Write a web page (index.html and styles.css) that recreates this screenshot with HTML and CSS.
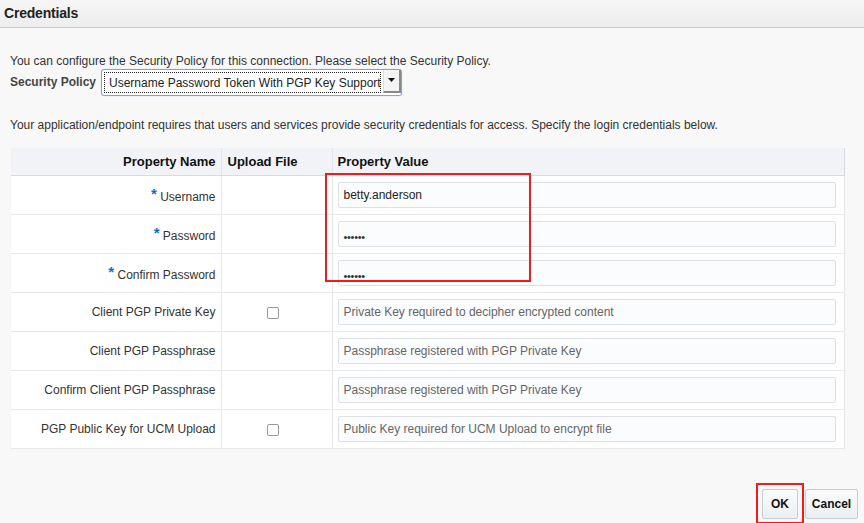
FILE: index.html
```html
<!DOCTYPE html>
<html>
<head>
<meta charset="utf-8">
<link rel="stylesheet" href="styles.css">
</head>
<body>
<div class="titlebar">Credentials</div>
<div class="content">
  <p class="intro">You can configure the Security Policy for this connection. Please select the Security Policy.</p>
  <div class="policy-row">
    <span class="policy-label">Security Policy</span>
    <div class="select">
      <span class="select-text">Username Password Token With PGP Key Support</span>
      <span class="select-btn"><svg width="7" height="4" viewBox="0 0 7 4"><path d="M0 0h7L3.5 4z" fill="#111"/></svg></span>
    </div>
  </div>
  <p class="desc">Your application/endpoint requires that users and services provide security credentials for access. Specify the login credentials below.</p>
  <div class="table-wrap">
    <table class="props">
      <colgroup><col class="c1"><col class="c2"><col class="c3"></colgroup>
      <thead>
        <tr><th class="name">Property Name</th><th class="upload">Upload File</th><th class="value">Property Value</th></tr>
      </thead>
      <tbody>
        <tr><td class="name"><span class="req">*</span> Username</td><td class="upload"></td><td class="value"><div class="field filled">betty.anderson</div></td></tr>
        <tr><td class="name"><span class="req">*</span> Password</td><td class="upload"></td><td class="value"><div class="field filled dots">••••••</div></td></tr>
        <tr><td class="name"><span class="req">*</span> Confirm Password</td><td class="upload"></td><td class="value"><div class="field filled dots">••••••</div></td></tr>
        <tr><td class="name">Client PGP Private Key</td><td class="upload"><span class="check"></span></td><td class="value"><div class="field">Private Key required to decipher encrypted content</div></td></tr>
        <tr><td class="name">Client PGP Passphrase</td><td class="upload"></td><td class="value"><div class="field">Passphrase registered with PGP Private Key</div></td></tr>
        <tr><td class="name">Confirm Client PGP Passphrase</td><td class="upload"></td><td class="value"><div class="field">Passphrase registered with PGP Private Key</div></td></tr>
        <tr><td class="name">PGP Public Key for UCM Upload</td><td class="upload"><span class="check"></span></td><td class="value"><div class="field">Public Key required for UCM Upload to encrypt file</div></td></tr>
      </tbody>
    </table>
    <div class="highlight"></div>
  </div>
</div>
<div class="footer">
  <span class="ok-mark"><button class="btn ok">OK</button></span>
  <button class="btn cancel">Cancel</button>
</div>
</body>
</html>
```
FILE: styles.css
```css
html, body {
  margin: 0;
  padding: 0;
}
body {
  background: #f8f8f8;
  font-family: "Liberation Sans", Arial, sans-serif;
  font-size: 12px;
  color: #333;
  width: 864px;
  height: 523px;
  overflow: hidden;
  position: relative;
}
.titlebar {
  height: 27px;
  line-height: 26px;
  padding-left: 4px;
  font-size: 14px;
  font-weight: bold;
  color: #222;
  background: linear-gradient(#f6f6f6, #ededed);
  border-bottom: 1px solid #c8cbcf;
  letter-spacing: -0.2px;
}
.content {
  padding-left: 10px;
}
.intro {
  margin: 26px 0 0 0;
  line-height: 14px;
  color: #333;
}
.policy-row {
  display: flex;
  align-items: center;
  height: 28px;
}
.policy-label {
  font-weight: bold;
  color: #444;
  width: 91px;
}
.select {
  width: 301px;
  height: 27px;
  box-sizing: border-box;
  border: 1px solid #79a6e2;
  border-radius: 3px;
  background: #fff;
  display: flex;
  align-items: stretch;
  padding: 2px;
  box-shadow: 0 0 1px #9cc0ee;
}
.select-text {
  flex: 1;
  border: 1px dotted #222;
  font-size: 12px;
  line-height: 20px;
  padding-left: 4px;
  color: #222;
  white-space: nowrap;
  overflow: hidden;
}
.select-btn {
  width: 15px;
  margin-left: 2px;
  display: flex;
  align-items: center;
  justify-content: center;
  border-left: 1px solid #ddd;
  border-right: 2px solid #888;
  border-bottom: 2px solid #888;
  margin-top: -2px;
  margin-right: -2px;
  background: #f4f4f4;
}
.desc {
  margin: 22px 0 0 0;
  line-height: 14px;
  color: #333;
}
.table-wrap {
  position: relative;
  margin-top: 16px;
  margin-left: 1px;
  width: 833px;
}
.props {
  width: 833px;
  border-collapse: collapse;
  table-layout: fixed;
  background: #fff;
}
.c1 { width: 210px; }
.c2 { width: 111px; }
.c3 { width: 512px; }
.props th {
  height: 27px;
  padding: 0;
  background: #f2f3f6;
  border-bottom: 1px solid #d8dbe0;
  font-size: 13px;
  font-weight: bold;
  color: #111;
  text-align: left;
}
.props th + th, .props td + td {
  border-left: 1px solid #e4e6ea;
}
.props th.name, .props td.name {
  text-align: right;
  padding-right: 5px;
}
.props th.upload { padding-left: 6px; }
.props th.value { padding-left: 5px; }
.props td {
  height: 38px;
  padding: 0;
  border-bottom: 1px solid #e8e9ec;
  color: #333;
  vertical-align: middle;
}
.props td.value {
  padding: 0 8px 0 5px;
  border-right: 1px solid #e4e6ea;
}
.props th.value {
  border-right: 1px solid #d8dbe0;
}
.props td.upload {
  padding-left: 45px;
}
.req {
  color: #0b6fd0;
  font-weight: bold;
  font-size: 15px;
  position: relative;
  top: -2px;
}
.check {
  display: inline-block;
  width: 10px;
  height: 10px;
  border: 1px solid #999;
  border-radius: 2px;
  background: #fff;
  vertical-align: middle;
  margin-top: 1px;
}
.field {
  height: 24px;
  line-height: 24px;
  border: 1px solid #dde1e5;
  border-radius: 2px;
  background: #fbfcfe;
  padding-left: 5px;
  color: #666;
  white-space: nowrap;
  overflow: hidden;
}
.field.filled {
  color: #222;
}
.field.dots {
  font-size: 11px;
  letter-spacing: -0.3px;
  padding-top: 3px;
  height: 21px;
  color: #333;
}
.highlight {
  position: absolute;
  left: 314px;
  top: 25px;
  width: 202px;
  height: 105px;
  border: 2px solid #ee1c1c;
  pointer-events: none;
}
.footer {
  position: absolute;
  top: 483px;
  right: 6px;
  display: flex;
  align-items: flex-start;
  gap: 1px;
}
.ok-mark {
  display: block;
  border: 2px solid #ee1c1c;
  padding: 4px 4px 3px 4px;
}
.btn {
  display: block;
  font-family: "Liberation Sans", Arial, sans-serif;
  font-size: 12px;
  font-weight: bold;
  color: #111;
  height: 30px;
  padding: 0 6px;
  border: 1px solid #c5cdd5;
  border-radius: 2px;
  background: linear-gradient(#fafbfc, #eceff2);
  margin: 0;
}
.btn.ok {
  width: 36px;
  padding: 0;
}
.btn.cancel {
  margin-top: 6px;
  width: 53px;
  padding: 0;
}
```
